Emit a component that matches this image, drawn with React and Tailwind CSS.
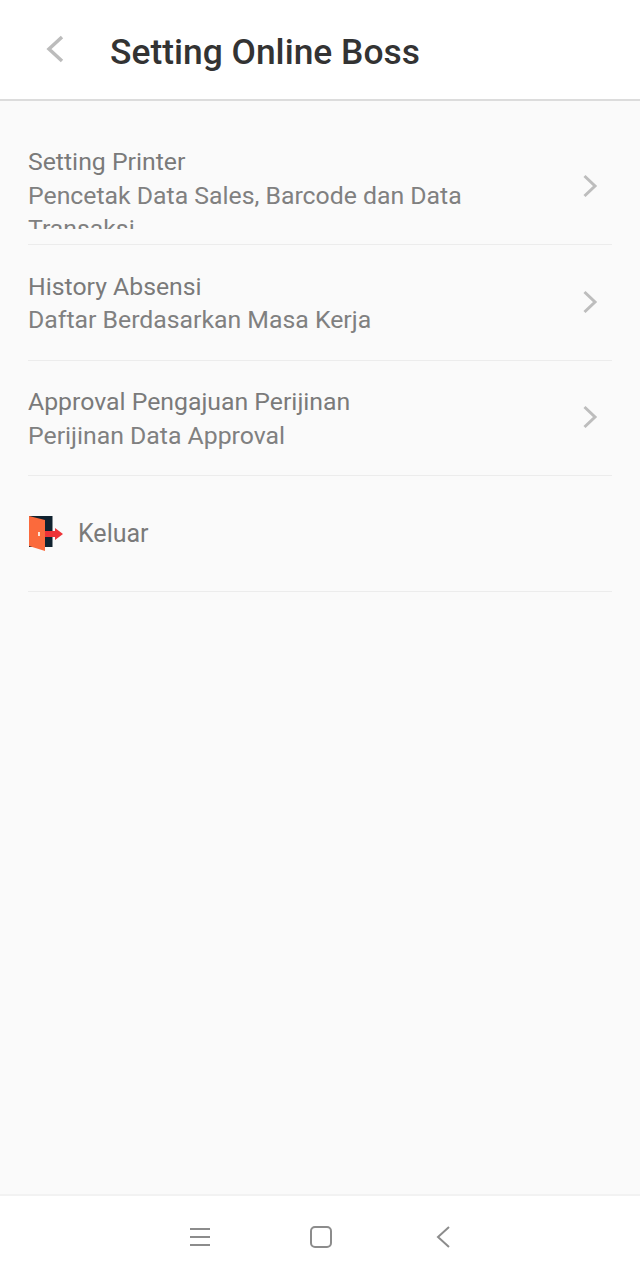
const MENU = [
  { title: 'Setting Printer', desc: 'Pencetak Data Sales, Barcode dan Data Transaksi' },
  { title: 'History Absensi', desc: 'Daftar Berdasarkan Masa Kerja' },
  { title: 'Approval Pengajuan Perijinan', desc: 'Perijinan Data Approval' },
];

function Chevron() {
  return (
    <svg width="16" height="24" viewBox="0 0 16 24" fill="none" stroke="#bdbdbd" strokeWidth="3" className="shrink-0">
      <path d="M2.5 2 L13 12 L2.5 22" />
    </svg>
  );
}

function DoorIcon() {
  return (
    <svg width="36" height="36" viewBox="0 0 36 36">
      <rect x="1" y="0" width="23.5" height="31" fill="#10222f" />
      <path d="M1 0 L17 4 L17 35 L1 30 Z" fill="#fb6a3c" />
      <rect x="10" y="16" width="2" height="4" fill="#ffe3d6" />
      <path d="M17 15 H27 V12 L35 18 L27 24 V21 H17 Z" fill="#ee3338" />
    </svg>
  );
}

export default function App() {
  return (
    <div className="w-[640px] h-[1280px] flex flex-col bg-[#fafafa] font-['Roboto',sans-serif]">
      {/* Header */}
      <header className="h-[101px] shrink-0 flex items-center bg-white border-b-2 border-[#dcdcdc]">
        <svg width="20" height="28" viewBox="0 0 20 28" fill="none" stroke="#bcbcbc" strokeWidth="3.5" className="ml-[45px] mb-[1px]">
          <path d="M17 2 L4 14 L17 26" />
        </svg>
        <h1 className="ml-[45px] text-[35.4px] font-medium text-[#333333] leading-none mt-[7px]">Setting Online Boss</h1>
      </header>

      {/* Menu */}
      <main className="flex-1 pt-[28px] px-[28px]">
        {MENU.map((item) => (
          <div key={item.title} className="h-[116px] last-of-type:h-[115px] [&:nth-child(3)]:h-[115px] flex items-center justify-between border-b border-[#ececec]">
            <div className="w-[470px] max-h-[84px] overflow-hidden text-[24.8px] leading-[33.5px] text-[#808080] mt-[1px]">
              <div className="text-[#7a7a7a]">{item.title}</div>
              <div>{item.desc}</div>
            </div>
            <div className="mr-[14px] mb-[2px]"><Chevron /></div>
          </div>
        ))}
        <div className="h-[116px] flex items-center border-b border-[#ececec]">
          <DoorIcon />
          <span className="ml-[14px] text-[25px] text-[#7a7a7a]">Keluar</span>
        </div>
      </main>

      {/* Android nav bar */}
      <footer className="h-[86px] shrink-0 flex items-center bg-white border-t-2 border-[#f2f2f2] pb-[2px]">
        <svg width="22" height="20" viewBox="0 0 22 20" fill="none" stroke="#8c8c8c" strokeWidth="1.8" className="ml-[189px]">
          <path d="M1 2 H21 M1 10 H21 M1 18 H21" />
        </svg>
        <svg width="24" height="24" viewBox="0 0 24 24" fill="none" stroke="#8c8c8c" strokeWidth="2" className="ml-[98px]">
          <rect x="2" y="2" width="20" height="20" rx="4" />
        </svg>
        <svg width="16" height="24" viewBox="0 0 16 24" fill="none" stroke="#8c8c8c" strokeWidth="2" className="ml-[102px]">
          <path d="M14 2 L3 12 L14 22" />
        </svg>
      </footer>
    </div>
  );
}
